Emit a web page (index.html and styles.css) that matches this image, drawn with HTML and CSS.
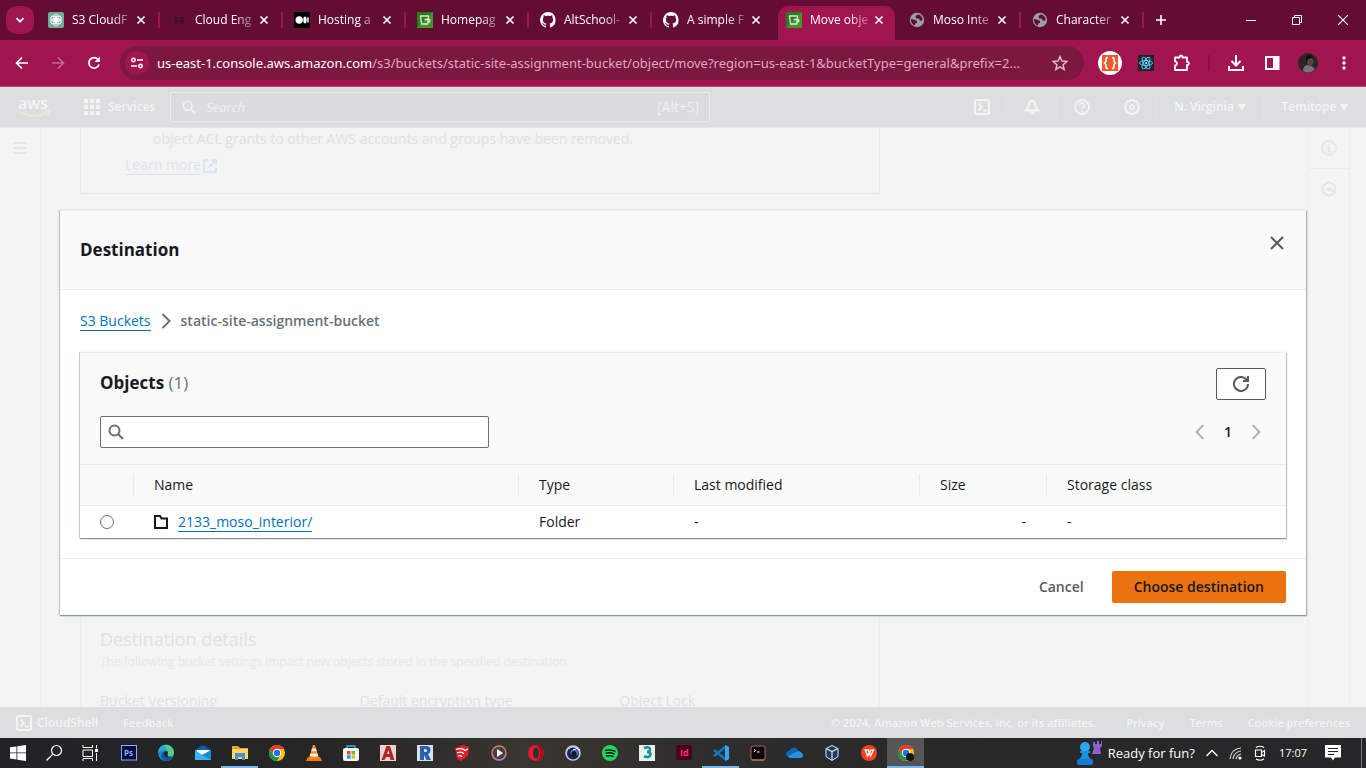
FILE: index.html
```html
<!DOCTYPE html>
<html lang="en">
<head>
<meta charset="utf-8">
<title>Move objects - S3 bucket</title>
<link rel="stylesheet" href="styles.css">
</head>
<body>
<svg class="defs" aria-hidden="true">
  <symbol id="close" viewBox="0 0 10 10"><path d="M1.5 1.5l7 7M8.5 1.5l-7 7" stroke="currentColor" stroke-width="1.7"/></symbol>
  <symbol id="github" viewBox="0 0 16 16"><path fill="#fff" d="M8 0a8 8 0 0 0-2.5 15.6c.4.1.5-.2.5-.4v-1.5c-2.2.5-2.700-1-2.700-1-.4-.9-.9-1.200-.9-1.200-.7-.5.1-.5.1-.5.8.1 1.200.8 1.200.8.7 1.300 1.900.9 2.300.7.1-.5.3-.9.5-1.100-1.800-.2-3.600-.9-3.600-4 0-.9.3-1.600.8-2.100-.1-.2-.4-1 .1-2.100 0 0 .7-.2 2.200.8a7.500 7.500 0 0 1 4 0c1.500-1 2.200-.8 2.200-.8.4 1.100.2 1.900.1 2.100.5.6.8 1.300.8 2.100 0 3.100-1.900 3.700-3.700 3.900.3.300.6.800.6 1.500v2.200c0 .2.100.5.500.4A8 8 0 0 0 8 0z"/></symbol>
  <symbol id="bucket" viewBox="0 0 16 16"><path fill="#2e7a20" d="M0 0h16v16H0z"/><path fill="#57a636" d="M16 0v16L0 16z" opacity=".6"/><path d="M3.500 4h8l-.7 8H4.500zM7.500 7.500h4.500q1 0 .8 1l-.5 1.500h-1" fill="none" stroke="#d9edcf" stroke-width="1.300" stroke-linejoin="round"/></symbol>
  <symbol id="globe" viewBox="0 0 16 16"><circle cx="8" cy="8" r="7.200" fill="#9aa0a6"/><path fill="#640d33" d="M2 7l3 .5 3 1.500v2l-2 .5v2C3.500 12.900 1.700 10.500 2 7zM8 2.500l3 .5L13.500 6l-.5 3-2-.5-1.500-2H7L6.500 4.500z"/></symbol>
  <symbol id="shell" viewBox="0 0 16 16"><rect x="1" y="1" width="14" height="14" rx="1.500" fill="none" stroke="currentColor" stroke-width="2"/><path d="M4.500 4.500L8 8l-3.500 3.500M9 11.500h3.500" fill="none" stroke="currentColor" stroke-width="1.800"/></symbol>
  <symbol id="caret" viewBox="0 0 8 7"><path d="M0 0h8L4 7z" fill="currentColor"/></symbol>
  <symbol id="search" viewBox="0 0 16 16"><circle cx="6.500" cy="6.500" r="5" fill="none" stroke="currentColor" stroke-width="2"/><path d="M10 10l5 5" stroke="currentColor" stroke-width="2.200"/></symbol>
  <symbol id="chrome" viewBox="0 0 16 16"><circle cx="8" cy="8" r="8" fill="#fbc116"/><path fill="#e33b2e" d="M1.070 4A8 8 0 0 1 14.930 4H8L4.540 10z"/><path fill="#229342" d="M1.070 4A8 8 0 0 0 8 16l3.460-6L8 12 4.540 10z"/><circle cx="8" cy="8" r="4.200" fill="#fff"/><circle cx="8" cy="8" r="3.200" fill="#1a73e8"/></symbol>
</svg>

<header class="tabstrip">
  <button class="tab-search" aria-label="Search tabs"><svg width="10" height="10" viewBox="0 0 10 10"><path d="M1.500 3.200L5 6.700l3.500-3.500" fill="none" stroke="#fff" stroke-width="1.800"/></svg></button>
  <nav class="tabs" aria-label="Open tabs">
    <div class="tab"><svg class="fav" viewBox="0 0 16 16"><rect width="16" height="16" rx="2" fill="#74aa9c"/><g fill="none" stroke="#fff" stroke-width=".9"><ellipse cx="8" cy="5.800" rx="2.500" ry="3.400"/><ellipse cx="8" cy="5.800" rx="2.500" ry="3.400" transform="rotate(60 8 8)"/><ellipse cx="8" cy="5.800" rx="2.500" ry="3.400" transform="rotate(120 8 8)"/><ellipse cx="8" cy="5.800" rx="2.500" ry="3.400" transform="rotate(180 8 8)"/><ellipse cx="8" cy="5.800" rx="2.500" ry="3.400" transform="rotate(240 8 8)"/><ellipse cx="8" cy="5.800" rx="2.500" ry="3.400" transform="rotate(300 8 8)"/></g></svg><span class="tab-title">S3 CloudF</span><button class="tab-close" aria-label="Close tab"><svg><use href="#close"/></svg></button></div>
    <div class="tab"><svg class="fav" viewBox="0 0 16 16"><path d="M3 6h4M9 6h4M3 8.500h10M3 10.500h4M9 10.500h4" stroke="#35131f" stroke-width="1.600"/></svg><span class="tab-title">Cloud Eng</span><button class="tab-close" aria-label="Close tab"><svg><use href="#close"/></svg></button></div>
    <div class="tab"><svg class="fav" viewBox="0 0 16 16"><path d="M0 0h16v16H0z"/><circle cx="5.200" cy="8" r="3.700" fill="#fff"/><ellipse cx="11" cy="8" rx="1.700" ry="3.500" fill="#fff"/><ellipse cx="14" cy="8" rx=".8" ry="3.200" fill="#fff"/></svg><span class="tab-title">Hosting a</span><button class="tab-close" aria-label="Close tab"><svg><use href="#close"/></svg></button></div>
    <div class="tab"><svg class="fav"><use href="#bucket"/></svg><span class="tab-title">Homepag</span><button class="tab-close" aria-label="Close tab"><svg><use href="#close"/></svg></button></div>
    <div class="tab"><svg class="fav"><use href="#github"/></svg><span class="tab-title">AltSchool-</span><button class="tab-close" aria-label="Close tab"><svg><use href="#close"/></svg></button></div>
    <div class="tab before-active"><svg class="fav"><use href="#github"/></svg><span class="tab-title">A simple F</span><button class="tab-close" aria-label="Close tab"><svg><use href="#close"/></svg></button></div>
    <div class="tab active"><svg class="fav"><use href="#bucket"/></svg><span class="tab-title">Move obje</span><button class="tab-close" aria-label="Close tab"><svg><use href="#close"/></svg></button></div>
    <div class="tab"><svg class="fav"><use href="#globe"/></svg><span class="tab-title">Moso Inte</span><button class="tab-close" aria-label="Close tab"><svg><use href="#close"/></svg></button></div>
    <div class="tab"><svg class="fav"><use href="#globe"/></svg><span class="tab-title">Character</span><button class="tab-close" aria-label="Close tab"><svg><use href="#close"/></svg></button></div>
  </nav>
  <button class="new-tab" aria-label="New tab"><svg width="12" height="12" viewBox="0 0 12 12"><path d="M6 1v10M1 6h10" stroke="#fff" stroke-width="1.600"/></svg></button>
  <div class="window-controls">
    <button aria-label="Minimize"><svg width="10" height="10" viewBox="0 0 10 10"><path d="M0 5.500h10" stroke="#fff"/></svg></button>
    <button aria-label="Restore"><svg width="10" height="10" viewBox="0 0 10 10"><path d="M.5 2.500h7v7h-7zM2.500 2.500v-2h7v7h-2" fill="none" stroke="#fff"/></svg></button>
    <button aria-label="Close"><svg width="10" height="10" viewBox="0 0 10 10"><path d="M0 0l10 10M10 0L0 10" stroke="#fff" stroke-width="1.100"/></svg></button>
  </div>
</header>

<div class="toolbar">
  <div class="nav-buttons">
    <button aria-label="Back"><svg width="14" height="14" viewBox="0 0 14 14"><path d="M13 7H2M7 1.500L1.500 7 7 12.500" fill="none" stroke="#fff" stroke-width="1.700"/></svg></button>
    <button aria-label="Forward"><svg width="14" height="14" viewBox="0 0 14 14"><path d="M1 7h11M7 1.500L12.500 7 7 12.500" fill="none" stroke="#c4668f" stroke-width="1.700"/></svg></button>
    <button aria-label="Reload"><svg width="14" height="14" viewBox="0 0 14 14"><path d="M12 8.500A5.200 5.200 0 1 1 11 3.500L12.500 5" fill="none" stroke="#fff" stroke-width="1.800"/><path d="M13 .5v5.500H7.500z" fill="#fff"/></svg></button>
  </div>
  <div class="omnibox">
    <button class="site-info" aria-label="Site information"><svg width="14" height="14" viewBox="0 0 14 14"><g fill="none" stroke="#fff" stroke-width="1.500"><circle cx="3.500" cy="4" r="1.700"/><path d="M7 4h6M1 10h6"/><circle cx="10.500" cy="10" r="1.700"/></g></svg></button>
    <div class="url"><b>us-east-1.console.aws.amazon.com</b>/s3/buckets/static-site-assignment-bucket/object/move?region=us-east-1&amp;bucketType=general&amp;prefix=2...</div>
    <button class="star" aria-label="Bookmark"><svg width="16" height="16" viewBox="0 0 16 16"><path d="M8 1.500l1.900 4.600 4.900.4-3.700 3.200 1.100 4.800L8 11.900l-4.200 2.600 1.100-4.800L1.200 6.500l4.900-.4z" fill="none" stroke="#dfb8c9" stroke-width="1.500"/></svg></button>
  </div>
  <div class="extensions">
    <button aria-label="JSON formatter"><svg width="24" height="24" viewBox="0 0 24 24"><circle cx="12" cy="12" r="12" fill="#fff"/><path fill="#f1592a" d="M4 4h16v16H4z"/><path d="M10 6.500q-2 0-2 1.500v2.500L6.500 12 8 13.500V16q0 1.500 2 1.500M14 6.500q2 0 2 1.500v2.500l1.500 1.500-1.500 1.500V16q0 1.500-2 1.500" fill="none" stroke="#fff" stroke-width="1.600"/></svg></button>
    <button aria-label="React tools"><svg width="16" height="16" viewBox="0 0 16 16"><path fill="#20232a" d="M0 0h16v16H0z"/><g fill="none" stroke="#61dafb" stroke-width=".9"><ellipse cx="8" cy="8" rx="6.500" ry="2.500"/><ellipse cx="8" cy="8" rx="6.500" ry="2.500" transform="rotate(60 8 8)"/><ellipse cx="8" cy="8" rx="6.500" ry="2.500" transform="rotate(120 8 8)"/></g><circle cx="8" cy="8" r="1.300" fill="#61dafb"/></svg></button>
    <button aria-label="Extensions"><svg width="18" height="18" viewBox="0 0 18 18"><path d="M2 3.500h4.500V3a1.500 1.500 0 0 1 3 0v.5H14V8h.5a1.500 1.500 0 0 1 0 3H14v5H2v-4.500a2 2 0 0 0 0-4z" fill="none" stroke="#fff" stroke-width="1.800" stroke-linejoin="round"/></svg></button>
    <span class="bar"></span>
    <button aria-label="Downloads"><svg width="18" height="18" viewBox="0 0 18 18"><path d="M9 1v10M4.500 7L9 11.500 13.500 7M2 12v4h14v-4" fill="none" stroke="#fff" stroke-width="2"/></svg></button>
    <button aria-label="Side panel"><svg width="16" height="16" viewBox="0 0 16 16"><rect x="2" y="2" width="12.500" height="12" fill="none" stroke="#fff" stroke-width="2"/><path d="M9 2h5.500v12H9z" fill="#fff"/></svg></button>
    <button aria-label="Profile"><svg width="20" height="20" viewBox="0 0 20 20"><circle cx="10" cy="10" r="10" fill="#2a2627"/><ellipse cx="12" cy="8" rx="3.500" ry="4.500" fill="#584542"/><path d="M5 18q0-5 4-6l5 1 3 3q-5 6-12 2z" fill="#757274"/><path d="M8 3q4-3 7 1l1 4-2-3-4 1-2 6z" fill="#111"/></svg></button>
    <button aria-label="Menu"><svg width="16" height="16" viewBox="0 0 16 16"><g fill="#fff"><circle cx="8" cy="3" r="1.700"/><circle cx="8" cy="8" r="1.700"/><circle cx="8" cy="13" r="1.700"/></g></svg></button>
  </div>
</div>

<div class="viewport">
  <header class="aws-header">
    <a class="aws-logo" href="#" aria-label="aws"><span>aws</span><svg width="32" height="8" viewBox="0 0 32 8"><path d="M1 1.500Q14 9.500 28 3M25.500 1.500l5.500-.5-1.500 5" fill="none" stroke="#f3e5d6" stroke-width="1.800"/></svg></a>
    <button class="services"><svg width="16" height="16" viewBox="0 0 16 16"><path fill="currentColor" d="M0 0h4v4H0zM6 0h4v4H6zM12 0h4v4h-4zM0 6h4v4H0zM6 6h4v4H6zM12 6h4v4h-4zM0 12h4v4H0zM6 12h4v4H6zM12 12h4v4h-4z"/></svg>Services</button>
    <label class="aws-search"><svg width="14" height="14"><use href="#search"/></svg><input type="text" placeholder="Search" aria-label="Search"><span>[Alt+S]</span></label>
    <div class="aws-tools">
      <button aria-label="CloudShell"><svg width="16" height="16"><use href="#shell"/></svg></button>
      <button aria-label="Notifications"><svg width="16" height="16" viewBox="0 0 16 16"><path d="M8 1.500q-3 1-3 4.500L4 9l-2.500 2.500h13L12 9l-1-3q0-3.500-3-4.500zM6.500 12.500v1q1.500 2.500 3 0v-1" fill="none" stroke="currentColor" stroke-width="1.800"/></svg></button>
      <button aria-label="Help"><svg width="16" height="16" viewBox="0 0 16 16"><circle cx="8" cy="8" r="7" fill="none" stroke="currentColor" stroke-width="1.800"/><path d="M5.700 6.200q.1-2 2.300-2t2.300 1.800q0 1-1.100 1.700T8 9.700M8 11v1.800" fill="none" stroke="currentColor" stroke-width="1.700"/></svg></button>
      <button aria-label="Settings"><svg width="16" height="16" viewBox="0 0 16 16"><path d="M6.500 1h3l.7 1.500 1.700-.5L14 4.100l-.5 1.700 1.500.7v3l-1.500.7.5 1.700-2.100 2.100-1.700-.5-.7 1.500h-3l-.7-1.500-1.700.5L2 11.900l.5-1.700L1 9.500v-3l1.500-.7L2 4.100 4.100 2l1.700.5z" fill="none" stroke="currentColor" stroke-width="1.700"/><circle cx="8" cy="8" r="2" fill="none" stroke="currentColor" stroke-width="1.700"/></svg></button>
      <button class="menu">N. Virginia <svg width="8" height="7"><use href="#caret"/></svg></button>
      <button class="menu account">Temitope <svg width="8" height="7"><use href="#caret"/></svg></button>
    </div>
  </header>

  <div class="console">
    <aside class="rail left"><button aria-label="Open navigation"><svg width="14" height="12" viewBox="0 0 14 12"><path d="M0 1h14M0 6h14M0 11h14" stroke="currentColor" stroke-width="2"/></svg></button></aside>
    <main class="content">
      <section class="warning">
        <p>object ACL grants to other AWS accounts and groups have been removed.</p>
        <a href="#"><span>Learn more</span><svg width="14" height="14" viewBox="0 0 14 14"><path d="M5 1H1v12h12V9M8 1h5v5M13 1L5.500 8.500" fill="none" stroke="currentColor" stroke-width="2"/></svg></a>
      </section>
      <section class="details">
        <h2>Destination details</h2>
        <p>The following bucket settings impact new objects stored in the specified destination.</p>
        <div class="detail-grid"><span>Bucket Versioning</span><span>Default encryption type</span><span>Object Lock</span></div>
      </section>
    </main>
    <aside class="rail right">
      <button aria-label="Info"><svg width="16" height="16" viewBox="0 0 16 16"><circle cx="8" cy="8" r="7" fill="none" stroke="currentColor" stroke-width="1.800"/><path d="M8 3.500v2M6.500 7.500H8V12M6 12h4" fill="none" stroke="currentColor" stroke-width="1.800"/></svg></button>
      <button aria-label="Diagnostics"><svg width="16" height="16" viewBox="0 0 16 16"><path d="M8 1l6 3.500v7L8 15l-6-3.500v-7z" fill="none" stroke="currentColor" stroke-width="1.800"/><path d="M8 8l5 3" stroke="currentColor" stroke-width="1.800"/><circle cx="8" cy="8" r="2" fill="currentColor"/></svg></button>
    </aside>
  </div>

  <footer class="aws-footer">
    <button class="cloudshell"><svg width="16" height="16"><use href="#shell"/></svg>CloudShell</button>
    <a href="#">Feedback</a>
    <span class="copyright">© 2024, Amazon Web Services, Inc. or its affiliates.</span>
    <a href="#">Privacy</a><a href="#">Terms</a><a href="#">Cookie preferences</a>
  </footer>

  <div class="overlay">
    <div class="modal" role="dialog" aria-labelledby="dlg-title">
      <header class="modal-header"><h1 id="dlg-title">Destination</h1><button aria-label="Close dialog"><svg width="14" height="14" viewBox="0 0 14 14"><path d="M1 1l12 12M13 1L1 13" stroke="#545b64" stroke-width="2"/></svg></button></header>
      <div class="modal-body">
        <nav class="crumbs" aria-label="Breadcrumb"><a class="link" href="#">S3 Buckets</a><svg width="10" height="16" viewBox="0 0 10 16"><path d="M1.500 1L8.500 8l-7 7" fill="none" stroke="#687078" stroke-width="2"/></svg><b>static-site-assignment-bucket</b></nav>
        <section class="objects">
          <div class="objects-top">
            <div class="objects-row heading"><h2>Objects <span>(1)</span></h2><button class="refresh" aria-label="Refresh"><svg width="16" height="16" viewBox="0 0 16 16"><path d="M15 8A7 7 0 1 1 12.900 3L15 5" fill="none" stroke="#545b64" stroke-width="2"/><path d="M15 0v5h-5" fill="none" stroke="#545b64" stroke-width="2"/></svg></button></div>
            <div class="objects-row">
              <label class="filter"><svg width="16" height="16"><use href="#search"/></svg><input type="text" aria-label="Find objects by prefix"></label>
              <div class="pager"><button aria-label="Previous page"><svg width="10" height="16" viewBox="0 0 10 16"><path d="M8.500 1L1.500 8l7 7" fill="none" stroke="currentColor" stroke-width="2"/></svg></button><b>1</b><button aria-label="Next page"><svg width="10" height="16" viewBox="0 0 10 16"><path d="M1.500 1L8.500 8l-7 7" fill="none" stroke="currentColor" stroke-width="2"/></svg></button></div>
            </div>
          </div>
          <table>
            <colgroup><col class="c-pick"><col class="c-name"><col class="c-type"><col class="c-date"><col class="c-size"><col></colgroup>
            <thead><tr><th></th><th><div>Name</div></th><th><div>Type</div></th><th><div>Last modified</div></th><th><div>Size</div></th><th><div>Storage class</div></th></tr></thead>
            <tbody><tr>
              <td class="pick"><input type="radio" name="object" aria-label="Select 2133_moso_interior/"></td>
              <td><div class="name"><svg width="14" height="14" viewBox="0 0 14 14"><path d="M1 1h5l1.500 2.500H13V13H1z" fill="none" stroke="#16191f" stroke-width="2"/></svg><a class="link" href="#">2133_moso_interior/</a></div></td>
              <td>Folder</td><td>-</td><td class="num">-</td><td>-</td>
            </tr></tbody>
          </table>
        </section>
      </div>
      <footer class="modal-footer"><button class="cancel">Cancel</button><button class="primary">Choose destination</button></footer>
    </div>
  </div>
</div>

<footer class="taskbar">
  <div class="apps">
    <div class="system">
      <button aria-label="Start"><svg viewBox="0 0 16 16"><path fill="#fff" d="M0 2.300L6.500 1.400v6.100H0zM7.300 1.300L16 0v7.500H7.300zM0 8.300h6.500v6.200L0 13.600zM7.300 8.300H16V16l-8.700-1.200z"/></svg></button>
      <button aria-label="Search"><svg viewBox="0 0 16 16"><circle cx="10.500" cy="5.500" r="5" fill="none" stroke="#fff" stroke-width="1.200"/><path d="M6.900 9.100L.5 15.500" stroke="#fff" stroke-width="1.300"/></svg></button>
      <button aria-label="Task view"><svg viewBox="0 0 16 16"><path d="M1 0v2.500h9.500V0M1 5h9.500v6.500H1zM1 16v-2.500h9.500V16M14.500 0v3.500M14.500 8v8" fill="none" stroke="#fff"/><path d="M13 4h3v3h-3z" fill="#fff"/></svg></button>
    </div>
    <button aria-label="Photoshop"><svg viewBox="0 0 16 16"><rect x=".5" y=".5" width="15" height="14.500" fill="#0c0542" stroke="#7db5f0"/><text x="3" y="11" font-size="8" font-weight="700" fill="#7db5f0">Ps</text></svg></button>
    <button aria-label="Edge"><svg viewBox="0 0 16 16"><circle cx="8" cy="8" r="8" fill="#1586d1"/><path d="M0 8a8 8 0 0 1 16-1q0 4-4 4-3 0-2.500-2Q9 5 5 5.500 2 6 0 8z" fill="#28a9d8"/><path d="M6 .3a8 8 0 0 1 10 7q0 4-4 4-3 0-2.500-2Q11 5 6 .3z" fill="#52d07c"/><path d="M6 7q-1 6 8 5.500A8 8 0 0 1 8 16Q2 14 3.500 9q1-2 2.500-2z" fill="#0c59a4"/><path d="M9.500 9.500Q10.500 8 9.500 6.500 7.500 5.500 6 7q-1 4 3 5.200 3 .8 5-.2-4.500.5-4.500-2.500z" fill="#262626"/></svg></button>
    <button aria-label="Mail"><svg viewBox="0 0 16 16"><path d="M0 5l8-5 8 5v2H0z" fill="#0a5cad"/><path d="M1.500 5h13v5h-13z" fill="#fff"/><path d="M0 5l8 5.500L16 5v10H0z" fill="#35b4ed"/><path d="M16 5v10L7 10z" fill="#168bd6"/></svg></button>
    <button class="running" aria-label="File Explorer"><svg viewBox="0 0 16 16"><path d="M0 1h6l2 2h8v11H0z" fill="#e9a51a"/><path d="M0 4h16v10H0z" fill="#ffd766"/><path d="M3 15V8h10v7h-3v-3H6v3z" fill="#3c8fd9"/></svg></button>
    <button aria-label="Chrome"><svg><use href="#chrome"/></svg></button>
    <button aria-label="VLC"><svg viewBox="0 0 16 16"><path d="M2 12h12l2 4H0z" fill="#ef7d0b"/><path d="M7 0h2l4 13q-5 2-10 0z" fill="#f58a1b"/><path d="M6.100 3.500h3.800l.8 2.700H5.300zM4.500 8.500h7l.8 2.500q-4 1.500-8.600 0z" fill="#eee"/></svg></button>
    <button aria-label="Store"><svg viewBox="0 0 16 16"><path d="M4 4V1h8v3" fill="none" stroke="#37b5ee" stroke-width="1.300"/><rect y="3" width="16" height="13" rx="2" fill="#f5f5f5"/><path d="M4 6h3.500v3.500H4z" fill="#e94c2b"/><path d="M8.500 6H12v3.500H8.500z" fill="#7ab51c"/><path d="M4 10.200h3.500v3.500H4z" fill="#1a9fe6"/><path d="M8.500 10.200H12v3.500H8.500z" fill="#f8b512"/></svg></button>
    <button aria-label="AutoCAD"><svg viewBox="0 0 16 16"><path fill="#eed2cf" d="M0 0h16v16H0z"/><path d="M1.500 15L6.500 1h3.500l4.500 14h-4l-.8-3H6l-1.500 3zM7 9h2.500L8.500 5z" fill="#b3252b"/></svg></button>
    <button aria-label="Revit"><svg viewBox="0 0 16 16"><path fill="#d3e1f2" d="M0 0h16v16H0z"/><path d="M3 1h6q4.500 0 4.500 4 0 3-2.500 4l3 6H9.500L7 10v5H3zM7 4v3h1.500q1.500 0 1.500-1.500T8.500 4z" fill="#2962aa"/></svg></button>
    <button aria-label="SketchUp"><svg viewBox="0 0 16 16"><path d="M1 3l8-3 6 2-1 9-7 5-4-2z" fill="#db1f26"/><path d="M2 4.500q6-2 9 1l3-1.500M3 8q5-2 7 1M4 11q3-1 4 1" fill="none" stroke="#fff" stroke-width="1.300"/></svg></button>
    <button aria-label="Media Player"><svg viewBox="0 0 16 16"><circle cx="8" cy="8" r="7" fill="#423e43" stroke="#cf805e" stroke-width="1.500"/><path d="M1.500 10.500A7 7 0 0 0 14.500 10.500" fill="none" stroke="#a474cc" stroke-width="1.500"/><path d="M6 4l6 4-6 4z" fill="#fff"/></svg></button>
    <button aria-label="Opera"><svg viewBox="0 0 16 16"><circle cx="8" cy="8" r="8" fill="#e51c2f"/><path d="M8 0a8 8 0 0 1 0 16q4-3 4-8T8 0z" fill="#a70f1d"/><ellipse cx="8" cy="8" rx="3" ry="5.500" fill="#302f2f"/></svg></button>
    <button aria-label="Cinema 4D"><svg viewBox="0 0 16 16"><circle cx="8" cy="8" r="7.800" fill="#c1cae9"/><circle cx="8" cy="8.500" r="6" fill="#1a2551"/><ellipse cx="9.500" cy="7.500" rx="4" ry="3" fill="#5676c5"/><circle cx="9" cy="8.500" r="2.500" fill="#0b1029"/><path d="M8 5q4-3 7 0" fill="none" stroke="#fff"/></svg></button>
    <button aria-label="Spotify"><svg viewBox="0 0 16 16"><circle cx="8" cy="8" r="8" fill="#1ed760"/><path d="M3 5.500q5.500-1.500 10.500 1M3.500 8.300q4.500-1.300 9 .8M4 11q4-1 7.500.7" fill="none" stroke="#191414" stroke-width="1.500"/></svg></button>
    <button aria-label="3ds Max"><svg viewBox="0 0 16 16"><path fill="#e3f2f1" d="M0 0h16v16H0z"/><path d="M5 3q6-2 6 1.500Q11 7 8 7q3.500 0 3.500 2.500Q11 13 5 11.500" fill="none" stroke="#178d8f" stroke-width="2.500"/></svg></button>
    <button aria-label="InDesign"><svg viewBox="0 0 16 16"><rect width="16" height="15" rx="2.500" fill="#49021f"/><text x="4" y="11" font-size="9" font-weight="700" fill="#ff3366">Id</text></svg></button>
    <button class="running" aria-label="VS Code"><svg viewBox="0 0 16 16"><path d="M12 0l4 1.800v12.400L12 16z" fill="#32a9ee"/><path d="M1 5l11 9M1 11L12 2" stroke="#0a7cc5" stroke-width="2.300"/></svg></button>
    <button aria-label="Terminal"><svg viewBox="0 0 16 16"><rect x="1" y="1" width="14" height="14" rx="2" fill="#0a0508" stroke="#b65b75"/><path d="M1.500 15h13" stroke="#c48743"/><path d="M4 4.500l1.500 1.200L4 7M7 7h2.500" fill="none" stroke="#fff"/></svg></button>
    <button aria-label="OneDrive"><svg viewBox="0 0 16 16"><path d="M2 12a3 3 0 0 1 0-6 5 5 0 0 1 9-1l3 8z" fill="#0867b8"/><path d="M1 11l8-4q3-2 4.500 0Q16 8 16 10.500 16 13 13 13H3q-1 0-2-2z" fill="#2395e1"/></svg></button>
    <button aria-label="VirtualBox"><svg viewBox="0 0 16 16"><path d="M2 3.500L8 .5l6 3v8l-6 4-6-4z" fill="#1d3c67" stroke="#d9e5f1"/><path d="M2 3.500L8 6.500l6-3M8 6.500v9" fill="none" stroke="#d9e5f1" stroke-width="1.200"/></svg></button>
    <button aria-label="WPS"><svg viewBox="0 0 16 16"><circle cx="8" cy="8" r="8" fill="#f8421d"/><path d="M3.500 5h4L9.500 11 12.500 5H10L6.500 11 4.500 5" fill="none" stroke="#fff" stroke-width="1.400"/></svg></button>
    <button class="running current" aria-label="Chrome, profile 2"><svg viewBox="0 0 16 16"><use href="#chrome"/><circle cx="12" cy="12" r="4" fill="#151414"/></svg></button>
  </div>
  <div class="tray">
    <button class="fun"><svg width="26" height="26" viewBox="0 0 26 26"><path d="M17 2h2v2h2V1h2v3h2V1h1v5l-2 2 1 6h2H16l2-6-1-2z" fill="#8e63c9"/><circle cx="9" cy="7" r="5" fill="#2aa5ee"/><path d="M4 11h10v2h-2q0 4 3 6H3q3-2 3-6H4z" fill="#1b8fe0"/><rect x="1" y="19" width="16" height="6" rx="2" fill="#137bcf"/></svg>Ready for fun?</button>
    <button aria-label="Show hidden icons"><svg width="14" height="14" viewBox="0 0 14 14"><path d="M1.500 10L7 4.500l5.500 5.500" fill="none" stroke="#fff" stroke-width="1.300"/></svg></button>
    <button aria-label="Network"><svg width="14" height="14" viewBox="0 0 14 14"><g fill="none" stroke="#d5d5d5" stroke-width="1.200"><path d="M1 13Q2 3 12 2M4 13q1-7 8-8M7 13q1-4 5-5"/></g><circle cx="11" cy="12" r="1.600" fill="#fff"/></svg></button>
    <button aria-label="Camera"><svg width="14" height="16" viewBox="0 0 14 16"><path d="M2.500 5h6v6.500h-6zM8.500 7.500L11.500 5.500v5.500L8.500 9.500M3 2.500q4-2.500 8 0M3 14q4 2.500 8 0" fill="none" stroke="#fff" stroke-width="1.200"/></svg></button>
    <time>17:07</time>
    <button class="notes" aria-label="Notifications"><svg width="16" height="16" viewBox="0 0 16 16"><path d="M0 0h16v12.500H10L8 15.500l-2-3H0z" fill="#fff"/><path d="M3 3.500h10M3 6.500h10M3 9.500h6" stroke="#222"/></svg></button>
  </div>
</footer>
</body>
</html>
```
FILE: styles.css
```css
* { box-sizing: border-box; }
body { margin: 0; height: 100vh; display: flex; flex-direction: column; overflow: hidden; font: 14px/20px "Open Sans", "Noto Sans", sans-serif; color: #16191f; }
button { border: 0; padding: 0; margin: 0; background: none; color: inherit; font: inherit; display: inline-flex; align-items: center; justify-content: center; }
input { font: inherit; color: inherit; }
h1, h2, p { margin: 0; }
a { text-decoration: none; color: inherit; }
svg { display: block; flex: none; }
.defs { position: absolute; width: 0; height: 0; }

/* Browser tabs */
.tabstrip { display: flex; flex: none; height: 40px; background: #640d33; color: #fff; }
.tab-search { width: 28px; height: 28px; margin: 6px 3px 6px 6px; border-radius: 10px; background: #a0154f; }
.tabs { display: flex; flex: 0 1 1107px; min-width: 0; padding-top: 6px; }
.tab { position: relative; display: flex; align-items: center; flex: 1 1 0; min-width: 0; height: 34px; padding: 0 12px 6px 11px; font-size: 12px; line-height: 20px; }
.tab::after { content: ""; position: absolute; right: 0; top: 6px; width: 2px; height: 16px; background: #a0154f; }
.tab.active::after, .tab.before-active::after { display: none; }
.tab.active::before { content: ""; position: absolute; inset: 0 3px; border-radius: 10px 10px 0 0; background: #a0154f; }
.tab.active > * { position: relative; }
.fav { width: 16px; height: 16px; margin-right: 8px; }
.tab-title { flex: 1; min-width: 0; overflow: hidden; white-space: nowrap; mask-image: linear-gradient(90deg, #000 65%, #0003); }
.tab-close { margin-left: 2px; width: 14px; height: 14px; }
.tab-close svg { width: 10px; height: 10px; }
.new-tab { width: 34px; }
.window-controls { display: flex; margin-left: auto; }
.window-controls button { width: 46px; }

/* Browser toolbar */
.toolbar { display: flex; flex: none; align-items: center; height: 47px; padding-right: 4px; background: #a0154f; border-bottom: 1px solid #b64a77; color: #fff; }
.nav-buttons { display: flex; padding: 0 8px 0 4px; }
.nav-buttons button { width: 36px; height: 36px; }
.omnibox { display: flex; align-items: center; flex: 1; min-width: 0; height: 34px; padding: 0 16px 0 5px; border-radius: 17px; background: #7c1840; }
.site-info { width: 24px; height: 24px; border-radius: 12px; background: #a0154f; margin-right: 8px; }
.url { flex: 1; min-width: 0; overflow: hidden; text-overflow: ellipsis; white-space: nowrap; font-family: "Noto Sans", "Open Sans", sans-serif; font-size: 13px; color: #dfa9c0; }
.url b { font-weight: 400; color: #fff; }
.star { margin-left: 10px; }
.extensions { display: flex; align-items: center; padding-left: 8px; }
.extensions button { width: 36px; }
.bar { width: 2px; height: 16px; margin: 0 8px; background: #7c1840; }

/* Console chrome, dimmed behind the dialog */
.viewport { position: relative; flex: 1; min-height: 0; display: flex; flex-direction: column; background: #f2f3f3; }
.aws-header { display: flex; flex: none; align-items: center; height: 41px; background: #dcdfe0; border-bottom: 1px solid #e4e6e7; color: #f3f5f5; font-size: 12px; font-weight: 600; }
.aws-logo { width: 67px; padding-left: 18px; border-right: 1px solid #e0e3e3; font-size: 16px; line-height: 14px; }
.services { margin: 0 15px 0 17px; gap: 8px; }
.aws-search { display: flex; align-items: center; flex: 0 1 540px; height: 30px; padding: 0 10px 0 11px; border: 1px solid #ebecee; border-radius: 2px; background: #dadcde; font-size: 14px; font-weight: 400; color: #f0f1f2; }
.aws-search input { flex: 1; min-width: 0; border: 0; outline: 0; background: none; padding: 0 10px; font-size: 13px; }
.aws-search input::placeholder { color: #eeeff0; font-style: italic; }
.aws-search span { color: #eeeff0; }
.aws-tools { display: flex; align-items: center; margin-left: auto; }
.aws-tools button { width: 50px; height: 22px; border-right: 1px solid #e0e3e3; }
.aws-tools .menu { width: 107px; gap: 4px; }
.aws-tools .account { width: 102px; border: 0; }
.console { display: flex; flex: 1; min-height: 0; padding-right: 16px; }
.rail { flex: none; width: 41px; background: #f3f4f4; color: #e3e5e6; border-right: 1px solid #ebeded; }
.rail button { width: 40px; height: 40px; }
.rail.right { width: 42px; border-left: 1px solid #ebeded; }
.rail.right button:first-child { height: 41px; border-bottom: 1px solid #ebeded; }
.content { display: flex; flex-direction: column; justify-content: space-between; flex: 1; min-width: 0; padding: 0 39px; color: #dfe1e3; }
.warning { width: 800px; max-width: 100%; height: 66px; padding: 1px 44px 0; border: 1px solid #e9e6de; border-top: 0; border-radius: 0 0 2px 2px; background: #f3f3f1; }
.warning p { padding-left: 28px; margin-bottom: 6px; }
.warning a { display: inline-flex; align-items: center; gap: 2px; color: #dae6ef; }
.warning a span { line-height: 18px; border-bottom: 1px solid; }
.details { width: 800px; max-width: 100%; height: 107px; overflow: hidden; padding: 27px 0 0 19px; border: 1px solid #ebeded; border-width: 0 1px; background: #f3f4f4; }
.details h2 { font-size: 18px; font-weight: 400; line-height: 24px; }
.details p { font-size: 12px; line-height: 22px; color: #e6e8e9; }
.detail-grid { display: grid; grid-template-columns: repeat(3, 1fr); padding-top: 18px; }
.aws-footer { display: flex; flex: none; align-items: center; gap: 25px; height: 31px; padding: 0 16px; background: #dcdfe0; color: #f2f4f4; font-size: 11px; font-weight: 600; }
.cloudshell { gap: 5px; font-size: 12px; }
.copyright { margin: 0 5px 0 auto; }

/* Dialog */
.overlay { position: absolute; inset: 0; display: flex; align-items: center; justify-content: center; padding: 0 60px; }
.modal { width: 100%; background: #fff; border-top: 1px solid #eaeded; box-shadow: 0 1px 1px #8a9699, 1px 1px 1px #aab7b8, -1px 0 1px #c5cccc; }
.modal-header { display: flex; justify-content: space-between; padding: 28px 22px 28px 20px; background: #fafafa; border-bottom: 1px solid #eaeded; }
.modal-header h1 { font-size: 17px; font-weight: 700; line-height: 22px; }
.modal-header button { height: 14px; margin-top: -3px; }
.modal-body { padding: 20px; }
.crumbs { display: flex; align-items: center; gap: 10px; padding-bottom: 20px; line-height: 22px; }
.crumbs b { font-weight: 600; color: #687078; }
.link { color: #0073bb; line-height: 18px; border-bottom: 1px solid; }
.objects { border-top: 1px solid #eaeded; background: #fff; box-shadow: 0 1px 1px #8a9699, 1px 1px 1px #c5cccc, -1px 0 1px #d5dbdb; }
.objects-top { display: flex; flex-direction: column; gap: 16px; padding: 15px 20px 16px; background: #fafafa; }
.objects-row { display: flex; align-items: center; justify-content: space-between; }
.objects-row.heading { align-items: flex-start; }
.objects h2 { font-size: 17px; font-weight: 700; line-height: 30px; }
.objects h2 span { font-weight: 400; color: #687078; }
.refresh { width: 50px; height: 32px; border: 1px solid #545b64; border-radius: 2px; background: #fff; }
.filter { display: flex; align-items: center; flex: 0 1 389px; height: 32px; padding: 0 7px; border: 1px solid #687078; border-radius: 2px; background: #fff; color: #687078; }
.filter input { flex: 1; min-width: 0; border: 0; outline: 0; background: none; }
.pager { display: flex; align-items: center; gap: 18px; padding-right: 5px; }
.pager button { color: #aab7b8; }
.pager b { width: 10px; text-align: center; font-weight: 600; }
table { width: 100%; table-layout: fixed; border-collapse: collapse; }
.c-pick { width: 53px; }
.c-name { width: 385px; }
.c-type { width: 155px; }
.c-date { width: 246px; }
.c-size { width: 127px; }
th { padding: 9px 0; border: 1px solid #eaeded; border-width: 1px 0; background: #fafafa; font-weight: 400; text-align: left; }
th div { padding: 1px 20px; border-left: 1px solid #eaeded; }
td { padding: 6px 20px 6px 21px; }
.pick { padding-left: 20px; }
.pick input { display: block; appearance: none; width: 14px; height: 14px; margin: 0; border: 1px solid #687078; border-radius: 50%; background: #fff; }
.name { display: flex; align-items: center; gap: 10px; }
.num { text-align: right; }
.modal-footer { display: flex; justify-content: flex-end; gap: 6px; padding: 12px 20px; border-top: 1px solid #eaeded; }
.modal-footer button { height: 32px; padding: 0 22px; border-radius: 2px; font-weight: 600; }
.cancel { color: #545b64; }
.modal-footer .primary { background: #ec7211; color: #16191f; }

/* Desktop taskbar */
.taskbar { display: flex; flex: none; justify-content: space-between; height: 30px; background: linear-gradient(90deg, #222325, #262626 25%, #393530 38%, #2a2a2b 60%, #262628); color: #fff; }
.apps, .system { display: flex; }
.system { width: 110px; }
.system button { width: 36px; }
.apps > button { width: 37px; border: solid transparent; border-width: 2px 0; }
.apps svg { width: 16px; height: 16px; overflow: visible; }
.apps > .running { border-bottom-color: #76b9ed; }
.apps > .current { background: #555555; }
.tray { display: flex; align-items: center; gap: 10px; padding-right: 4px; }
.fun { gap: 6px; font-size: 13px; }
.tray time { margin-left: 2px; font-size: 11px; }
.notes { height: 30px; margin-left: 8px; padding-right: 20px; border-right: 1px solid #777; }
```
